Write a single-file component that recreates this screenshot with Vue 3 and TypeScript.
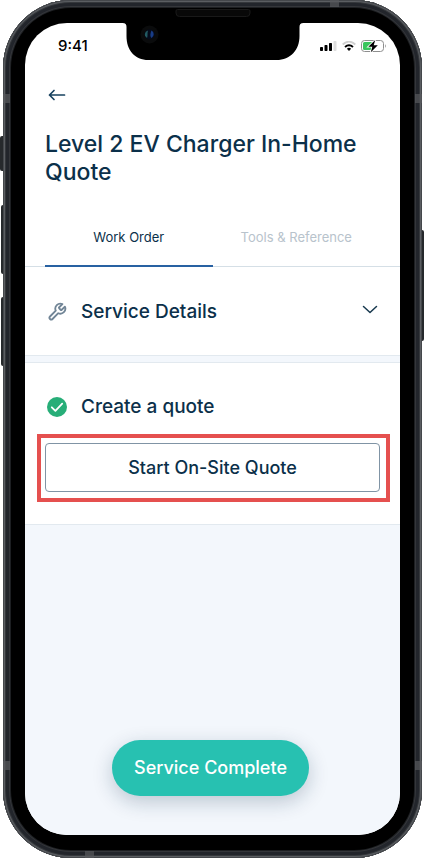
<script setup lang="ts">
import { ref } from 'vue'

type Tab = { id: string; label: string }

const tabs: Tab[] = [
  { id: 'work-order', label: 'Work Order' },
  { id: 'tools', label: 'Tools & Reference' },
]
const activeTab = ref('work-order')
const detailsOpen = ref(false)
</script>

<template>
  <div class="stage">
    <div class="phone">
      <span class="key key-mute"></span>
      <span class="key key-up"></span>
      <span class="key key-down"></span>
      <span class="key key-power"></span>
      <span class="band band-left band-upper"></span>
      <span class="band band-right band-upper"></span>
      <span class="band band-left band-lower"></span>
      <span class="band band-right band-lower"></span>
      <span class="band band-top"></span>
      <span class="band band-bottom"></span>
      <span class="speaker"></span>

      <div class="screen">
        <svg class="notch" width="181" height="37" viewBox="0 0 181 37" aria-hidden="true">
          <path d="M0 0H181C178 0 177 1.500 177 4V13C177 27 168 37 154 37H26C12 37 4 27 4 13V4C4 1.500 3 0 0 0Z" fill="#000" />
          <circle cx="27" cy="11.500" r="9" fill="#0a0b0c" />
          <circle cx="27" cy="11.500" r="5" fill="#050b1c" />
          <path d="M25.500 7.500a4 4 0 0 0-1 7.500c1-2 0-4 1-7.500Z" fill="#235b62" />
          <path d="M29 7.500a4.300 4.300 0 0 1 0 7.500c-2-2-1-5 0-7.500Z" fill="#183c86" />
        </svg>

        <header class="status">
          <span class="clock">9:41</span>
          <span class="indicators">
            <svg width="17" height="10" viewBox="0 0 17 10" aria-hidden="true">
              <rect x="0" y="6" width="3" height="4" rx="0.800" />
              <rect x="4.500" y="4" width="3" height="6" rx="0.800" />
              <rect x="9" y="2" width="3" height="8" rx="0.800" />
              <rect x="13.500" y="0" width="3" height="10" rx="0.800" fill="#dedede" />
            </svg>
            <svg width="14" height="10" viewBox="0 0 14 10" aria-hidden="true">
              <path d="M0.700 3.500Q7-2.200 13.300 3.500" fill="none" stroke="#cfcfcf" stroke-width="1.800" />
              <path d="M3 6Q7 2.500 11 6" fill="none" stroke="#000" stroke-width="1.900" />
              <path d="M4.900 7.700Q7 6 9.100 7.700L7 10Z" />
            </svg>
            <svg width="25" height="14" viewBox="0 0 25 14" aria-hidden="true">
              <rect x="0.500" y="1.500" width="22" height="11" rx="3" fill="#fff" stroke="#8e8e8e" />
              <path d="M24 5.300c1 .6 1 2.800 0 3.400Z" fill="#8e8e8e" />
              <rect x="2" y="3" width="10" height="8" rx="1.500" fill="#3ac55d" />
              <path d="M14.300 1L7.300 7.800H11.300L9.800 13.200L16.800 6.200H12.700Z" stroke="#fff" stroke-width="1.600" paint-order="stroke" />
            </svg>
          </span>
        </header>

        <main class="app">
          <div class="top">
            <button class="back" type="button" aria-label="Back">
              <svg width="18" height="12" viewBox="0 0 18 12" aria-hidden="true">
                <path d="M6 1.500L1.500 6L6 10.500M1.500 6H16.500" />
              </svg>
            </button>
            <h1>Level 2 EV Charger In-Home Quote</h1>
          </div>

          <nav class="tabs">
            <button
              v-for="tab in tabs"
              :key="tab.id"
              type="button"
              class="tab"
              :class="{ active: tab.id === activeTab }"
              @click="activeTab = tab.id"
            >{{ tab.label }}</button>
          </nav>

          <section class="panel details">
            <button class="row" type="button" :aria-expanded="detailsOpen" @click="detailsOpen = !detailsOpen">
              <svg class="wrench" width="24" height="24" viewBox="0 0 24 24" aria-hidden="true">
                <path d="M14.700 6.300a1 1 0 0 0 0 1.400l1.600 1.600a1 1 0 0 0 1.400 0l3.770-3.770a6 6 0 0 1-7.940 7.940l-6.910 6.910a2.120 2.120 0 0 1-3-3l6.910-6.910a6 6 0 0 1 7.940-7.940l-3.760 3.760z" />
              </svg>
              <span class="heading">Service Details</span>
              <svg class="chevron" width="16" height="14" viewBox="0 0 16 14" aria-hidden="true">
                <path d="M1.500 1.500L8 7.500L14.500 1.500" />
              </svg>
            </button>
          </section>

          <section class="panel quote">
            <div class="row">
              <svg class="done" width="24" height="24" viewBox="0 0 24 24" aria-hidden="true">
                <circle cx="12" cy="12" r="10" fill="#27ae78" />
                <path d="M6.800 12.300L10.400 15.900L17.200 8.700" fill="none" stroke="#fff" stroke-width="1.800" stroke-linecap="round" stroke-linejoin="round" />
              </svg>
              <h2 class="heading">Create a quote</h2>
            </div>
            <div class="highlight">
              <button class="start" type="button">Start On-Site Quote</button>
            </div>
          </section>

          <footer class="actions">
            <button class="complete" type="button">Service Complete</button>
          </footer>
        </main>
      </div>
    </div>
  </div>
</template>

<style>
body {
  background: #fff;
}
</style>

<style scoped>
.stage {
  box-sizing: border-box;
  min-height: 100vh;
  padding: 0 3px 2px;
  display: flex;
  font-family: Inter, "Liberation Sans", sans-serif;
  color: #0b304a;
}
.phone {
  position: relative;
  box-sizing: border-box;
  flex: 1;
  display: flex;
  min-width: 0;
  padding: 23px 22px;
  border-radius: 68px;
  background: #000;
  box-shadow:
    inset 0 0 0 1px #44474b,
    inset 0 0 0 2px #5b5e62,
    inset 0 0 0 3px #34373b,
    inset 0 0 0 6px #22252b,
    inset 0 0 0 7px #34363a,
    inset 0 0 0 8px #1d1f22;
}
.key {
  position: absolute;
  background: #26292c;
}
.key-mute {
  left: -3px;
  top: 136px;
  width: 3px;
  height: 35px;
  border-radius: 2px 0 0 2px;
}
.key-up,
.key-down {
  left: -2px;
  width: 2px;
  height: 69px;
  border-radius: 2px 0 0 2px;
}
.key-up {
  top: 205px;
}
.key-down {
  top: 297px;
}
.key-power {
  right: -2px;
  top: 230px;
  width: 2px;
  height: 111px;
  border-radius: 0 2px 2px 0;
}
.band {
  position: absolute;
  width: 7px;
  height: 9px;
  background: #57595c;
  opacity: 0.7;
}
.band-left {
  left: 0;
}
.band-right {
  right: 0;
}
.band-upper {
  top: 94px;
}
.band-lower {
  bottom: 88px;
}
.band-top,
.band-bottom {
  width: 9px;
  height: 7px;
}
.band-top {
  top: 0;
  right: 83px;
}
.band-bottom {
  bottom: 0;
  left: 82px;
}
.speaker {
  position: absolute;
  top: 9px;
  left: 50%;
  width: 73px;
  height: 6px;
  transform: translateX(-50%);
  border: 1px solid #191919;
  border-radius: 2px 2px 4px 4px;
  background: #080808;
}
.screen {
  position: relative;
  flex: 1;
  display: flex;
  flex-direction: column;
  min-width: 0;
  overflow: hidden;
  border-radius: 42px;
  background: #fff;
}
.notch {
  position: absolute;
  top: 0;
  left: 50%;
  transform: translateX(-50%);
}
.status {
  display: flex;
  align-items: center;
  justify-content: space-between;
  height: 46px;
  padding: 0 14px 0 33px;
}
.clock {
  font-size: 15px;
  line-height: 20px;
  font-weight: 500;
  color: #000;
}
.indicators {
  display: flex;
  align-items: center;
  gap: 5px;
}
.app {
  flex: 1;
  display: flex;
  flex-direction: column;
  background: #f3f7fc;
}
.top {
  padding: 16px 20px 0;
  background: #fff;
}
button {
  margin: 0;
  padding: 0;
  border: 0;
  background: none;
  font: inherit;
  color: inherit;
  cursor: pointer;
}
.back {
  display: flex;
  align-items: center;
  width: 24px;
  height: 20px;
  padding-left: 3px;
}
.back path {
  fill: none;
  stroke: #17415f;
  stroke-width: 1.7;
  stroke-linecap: round;
  stroke-linejoin: round;
}
h1 {
  margin: 25px 0 0;
  font-size: 23px;
  line-height: 28px;
  font-weight: 500;
}
.tabs {
  display: flex;
  padding: 23px 20px 0;
  background: #fff;
  border-bottom: 1px solid #d5dfe6;
}
.tab {
  flex: 1;
  height: 58px;
  margin-bottom: -1px;
  border-bottom: 2px solid transparent;
  font-size: 13px;
  line-height: 20px;
  color: #b8c3cc;
}
.tab.active {
  color: #0b304a;
  border-bottom-color: #2861a2;
}
.panel {
  padding: 0 20px;
  background: #fff;
  border-bottom: 1px solid #e2e9ef;
}
.row {
  display: flex;
  align-items: center;
  gap: 12px;
  width: 100%;
  padding-top: 2px;
  text-align: left;
}
.details .row {
  height: 88px;
}
.heading {
  flex: 1;
  margin: 0;
  font-size: 19px;
  line-height: 24px;
  font-weight: 500;
}
.wrench {
  padding: 2px;
  box-sizing: border-box;
}
.wrench path {
  fill: none;
  stroke: #718596;
  stroke-width: 2.2;
  stroke-linejoin: round;
}
.chevron {
  margin-right: 2px;
}
.chevron path {
  fill: none;
  stroke: #17384e;
  stroke-width: 1.5;
  stroke-linecap: round;
  stroke-linejoin: round;
}
.quote {
  margin-top: 6px;
  padding-top: 30px;
  padding-bottom: 22px;
  border-top: 1px solid #e2e9ef;
}
.highlight {
  margin: 15px -10px 0 -8px;
  padding: 5px 6px 6px 4px;
  border: 4px solid #e5504f;
}
.start {
  display: block;
  width: 100%;
  height: 49px;
  border: 1px solid #8094a5;
  border-radius: 4px;
  font-size: 18px;
  line-height: 24px;
  font-weight: 500;
}
.actions {
  display: flex;
  justify-content: center;
  margin-top: auto;
  padding: 24px 24px 39px 20px;
}
.complete {
  height: 56px;
  padding: 0 22px;
  border-radius: 28px;
  background: #27c1b1;
  box-shadow: 0 6px 20px rgba(11, 48, 74, 0.24);
  font-size: 18px;
  line-height: 24px;
  font-weight: 500;
  color: #fff;
}
</style>
